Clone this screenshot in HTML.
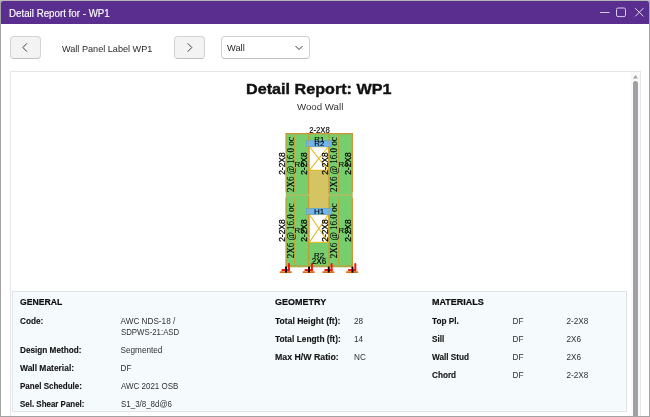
<!DOCTYPE html>
<html><head><meta charset="utf-8">
<style>
html,body{margin:0;padding:0;}
body{width:650px;height:417px;overflow:hidden;position:relative;background:#b9b9b9;will-change:transform;font-family:"Liberation Sans",sans-serif;color:#1a1a1a;}
.a{position:absolute;white-space:nowrap;line-height:1;}
#win{position:absolute;left:0;top:0;width:648px;height:415px;border:1px solid #a3a3a3;border-top-color:#b5b5b5;background:#fff;border-radius:3px 3px 0 0;}
#tb{position:absolute;left:1px;top:1px;width:648px;height:23px;background:#592e8e;border-radius:2px 2px 0 0;}
.btn{position:absolute;top:36px;width:29px;height:21px;border:1px solid #d1d3d6;border-bottom-color:#bfc2c6;border-radius:4px;background:#f3f3f3;}
#dd{position:absolute;left:221px;top:36px;width:87px;height:21px;border:1px solid #d0d0d0;border-bottom-color:#bdbdbd;border-radius:4px;background:#fff;}
#frame{position:absolute;left:10px;top:71px;width:629px;height:360px;border:1px solid #e6e6e6;background:#fff;}
#track{position:absolute;left:631px;top:72px;width:9px;height:345px;background:#f9f9f9;}
#thumb{position:absolute;left:633px;top:81px;width:5px;height:340px;border-radius:2.5px;background:#9f9fa4;}
#info{position:absolute;left:12px;top:291px;width:613px;height:119px;border:1px solid #dfe4ea;background:#f5fafd;}
.h{font-weight:700;font-size:9px;color:#0d0d0d;-webkit-text-stroke:0.2px #0d0d0d;}
.l{font-weight:700;font-size:8.2px;color:#141414;-webkit-text-stroke:0.12px #141414;}
.v{font-size:8.2px;color:#303030;}
</style></head><body>
<div id="win"></div>
<div id="tb"></div>
<div class="a" style="left:9px;top:9px;font-size:10px;color:#fff;transform:scaleX(0.975);transform-origin:0 0;-webkit-text-stroke:0.15px #fff;">Detail Report for - WP1</div>
<svg class="a" style="left:0;top:0" width="650" height="30">
 <line x1="600" y1="12.5" x2="609.5" y2="12.5" stroke="#d8cbe8" stroke-width="1"/>
 <rect x="616.5" y="8" width="9" height="8.6" rx="1.5" fill="none" stroke="#d8cbe8" stroke-width="1"/>
 <path d="M635.2 8.2 L643.4 16.4 M643.4 8.2 L635.2 16.4" stroke="#e3d9ef" stroke-width="1"/>
</svg>

<div class="btn" style="left:10px"></div>
<div class="btn" style="left:174px"></div>
<svg class="a" style="left:0;top:30px" width="320" height="40">
 <path d="M27 13.3 L22.9 17.5 L27 21.7" fill="none" stroke="#404040" stroke-width="1"/>
 <path d="M187.7 13.3 L191.8 17.5 L187.7 21.7" fill="none" stroke="#404040" stroke-width="1"/>
</svg>
<div class="a" style="left:62px;top:43.5px;font-size:9.6px;color:#2a2a2a;transform:scaleX(0.95);transform-origin:0 0;">Wall Panel Label WP1</div>
<div id="dd"></div>
<div class="a" style="left:227px;top:43px;font-size:9.6px;color:#2a2a2a;transform:scaleX(0.97);transform-origin:0 0;">Wall</div>
<svg class="a" style="left:290px;top:40px" width="20" height="15">
 <path d="M5.5 6 L9 9.5 L12.5 6" fill="none" stroke="#3a3a3a" stroke-width="1"/>
</svg>

<div id="frame"></div>
<div id="track"></div>
<svg class="a" style="left:631px;top:72px" width="9" height="10"><path d="M2 6.5 L4.5 3 L7 6.5 Z" fill="#a3a3a8"/></svg>
<div id="thumb"></div>

<div class="a" style="left:246px;top:81px;font-size:15.4px;font-weight:700;color:#111;-webkit-text-stroke:0.4px #111;transform:scaleX(1.05);transform-origin:0 0;">Detail Report: WP1</div>
<div class="a" style="left:297px;top:102px;font-size:9.7px;color:#333;">Wood Wall</div>

<!-- DIAGRAM -->
<svg class="a" style="left:0;top:0;will-change:transform" width="650" height="290" id="dg">
<rect x="286" y="133.5" width="66.4" height="132.5" fill="#76ce6c"/>
<rect x="308.7" y="171" width="20.3" height="37.5" fill="#d4c464"/>
<rect x="308.7" y="146.7" width="20.3" height="24.30000000000001" fill="#fff"/>
<path d="M309.3 146.7 L328.4 170.4 M328.4 146.7 L309.3 170.4" stroke="#e2bd2a" stroke-width="1.1" fill="none"/>
<rect x="309.3" y="146.7" width="19.1" height="23.70000000000001" fill="none" stroke="#e2bd2a" stroke-width="1.2"/>
<rect x="308.7" y="214.5" width="20.3" height="28.5" fill="#fff"/>
<path d="M309.3 214.5 L328.4 242.4 M328.4 214.5 L309.3 242.4" stroke="#e2bd2a" stroke-width="1.1" fill="none"/>
<rect x="309.3" y="214.5" width="19.1" height="27.9" fill="none" stroke="#e2bd2a" stroke-width="1.2"/>
<line x1="286" y1="195" x2="308.7" y2="195" stroke="#c8b55a" stroke-width="1.2"/>
<line x1="329" y1="195" x2="352.4" y2="195" stroke="#c8b55a" stroke-width="1.2"/>
<line x1="294.5" y1="134.5" x2="294.5" y2="192.3" stroke="#c9a039" stroke-width="0.9"/>
<line x1="294.5" y1="197.8" x2="294.5" y2="264" stroke="#c9a039" stroke-width="0.9"/>
<line x1="338.6" y1="134.5" x2="338.6" y2="192.3" stroke="#c9a039" stroke-width="0.9"/>
<line x1="338.6" y1="197.8" x2="338.6" y2="264" stroke="#c9a039" stroke-width="0.9"/>
<rect x="286" y="265" width="66.4" height="2.3" fill="#a9ad4c"/>
<rect x="306.6" y="140.8" width="25.1" height="5.7" fill="#6fb5ee" stroke="#5b9fd6" stroke-width="0.7"/>
<rect x="306.6" y="208.60000000000002" width="25.1" height="5.7" fill="#6fb5ee" stroke="#5b9fd6" stroke-width="0.7"/>
<path d="M286 192.3 L286 133.6 L352.4 133.6 L352.4 192.3" fill="none" stroke="#cf9430" stroke-width="1.2"/>
<path d="M286 197.6 L286 267 M352.4 197.6 L352.4 267" fill="none" stroke="#cf9430" stroke-width="1.2"/>
<path d="M286 192.3 L286 197.6 M352.4 192.3 L352.4 197.6" fill="none" stroke="#cf9430" stroke-width="1" stroke-opacity="0.35"/>
<line x1="308.7" y1="133.6" x2="308.7" y2="194" stroke="#cf9430" stroke-width="1.1" />
<line x1="308.7" y1="196.5" x2="308.7" y2="266" stroke="#cf9430" stroke-width="1.1"/>
<line x1="329" y1="133.6" x2="329" y2="194" stroke="#cf9430" stroke-width="1.1" />
<line x1="329" y1="196.5" x2="329" y2="266" stroke="#cf9430" stroke-width="1.1"/>
<rect x="306.6" y="140.8" width="25.1" height="5.7" fill="#6fb5ee" fill-opacity="0.6"/>
<rect x="306.6" y="208.60000000000002" width="25.1" height="5.7" fill="#6fb5ee" fill-opacity="0.6"/>
<g font-family="Liberation Sans" fill="#000" stroke="#000" stroke-width="0.12">
<text x="0" y="0" font-size="8.8" text-anchor="middle" transform="translate(319.5 132.7) scale(0.885 1)">2-2X8</text>
<text x="319.3" y="142.3" font-size="7.8" text-anchor="middle">R1</text>
<text x="319.3" y="146.3" font-size="7.8" text-anchor="middle">R2</text>
<text x="319.2" y="214.1" font-size="8" text-anchor="middle">H1</text>
<text x="319" y="257.6" font-size="7.9" text-anchor="middle">R2</text>
<text x="319" y="264.4" font-size="8.2" text-anchor="middle">2X6</text>
<text x="294.6" y="166.8" font-size="7.8">R6</text>
<text x="338.6" y="166.8" font-size="7.8">R4</text>
<text x="294.6" y="233" font-size="7.8">R5</text>
<text x="338.6" y="233" font-size="7.8">R3</text>
</g>
<g font-family="Liberation Serif" fill="#000" stroke="#000" stroke-width="0.1">
<text x="0" y="0" font-size="10.2" text-anchor="middle" transform="translate(293.5 164.6) rotate(-90) scale(0.885 1)">2X6 @ 16.0 oc</text>
<text x="0" y="0" font-size="10.2" text-anchor="middle" transform="translate(337.2 164.6) rotate(-90) scale(0.885 1)">2X6 @ 16.0 oc</text>
<text x="0" y="0" font-size="10.2" text-anchor="middle" transform="translate(293.5 230.9) rotate(-90) scale(0.885 1)">2X6 @ 16.0 oc</text>
<text x="0" y="0" font-size="10.2" text-anchor="middle" transform="translate(337.2 230.9) rotate(-90) scale(0.885 1)">2X6 @ 16.0 oc</text>
</g>
<g font-family="Liberation Sans" fill="#000" stroke="#000" stroke-width="0.25">
<text x="285.2" y="163.6" font-size="8.4" text-anchor="middle" transform="rotate(-90 285.2 163.6)">2-2X8</text>
<text x="307.0" y="163.6" font-size="8.4" text-anchor="middle" transform="rotate(-90 307.0 163.6)">2-2X8</text>
<text x="328.4" y="163.6" font-size="8.4" text-anchor="middle" transform="rotate(-90 328.4 163.6)">2-2X8</text>
<text x="350.6" y="163.6" font-size="8.4" text-anchor="middle" transform="rotate(-90 350.6 163.6)">2-2X8</text>
<text x="285.2" y="230.6" font-size="8.4" text-anchor="middle" transform="rotate(-90 285.2 230.6)">2-2X8</text>
<text x="307.0" y="230.6" font-size="8.4" text-anchor="middle" transform="rotate(-90 307.0 230.6)">2-2X8</text>
<text x="328.4" y="230.6" font-size="8.4" text-anchor="middle" transform="rotate(-90 328.4 230.6)">2-2X8</text>
<text x="350.6" y="230.6" font-size="8.4" text-anchor="middle" transform="rotate(-90 350.6 230.6)">2-2X8</text>
</g>
<line x1="280.4" y1="272.1" x2="290.9" y2="272.1" stroke="#d9700f" stroke-width="1.9" stroke-linecap="round"/>
<line x1="288.9" y1="264" x2="288.9" y2="270.6" stroke="#ff1010" stroke-width="2" stroke-linecap="round"/>
<line x1="282.4" y1="269.9" x2="288.9" y2="269.9" stroke="#ff1010" stroke-width="2" stroke-linecap="round"/>
<rect x="285.1" y="266.6" width="1.9" height="6" fill="#000"/>
<line x1="303.4" y1="272.1" x2="313.9" y2="272.1" stroke="#d9700f" stroke-width="1.9" stroke-linecap="round"/>
<line x1="311.9" y1="264" x2="311.9" y2="270.6" stroke="#ff1010" stroke-width="2" stroke-linecap="round"/>
<line x1="305.4" y1="269.9" x2="311.9" y2="269.9" stroke="#ff1010" stroke-width="2" stroke-linecap="round"/>
<rect x="308.1" y="266.6" width="1.9" height="6" fill="#000"/>
<line x1="323.09999999999997" y1="272.1" x2="333.59999999999997" y2="272.1" stroke="#d9700f" stroke-width="1.9" stroke-linecap="round"/>
<line x1="331.59999999999997" y1="264" x2="331.59999999999997" y2="270.6" stroke="#ff1010" stroke-width="2" stroke-linecap="round"/>
<line x1="325.09999999999997" y1="269.9" x2="331.59999999999997" y2="269.9" stroke="#ff1010" stroke-width="2" stroke-linecap="round"/>
<rect x="327.8" y="266.6" width="1.9" height="6" fill="#000"/>
<line x1="346.79999999999995" y1="272.1" x2="357.29999999999995" y2="272.1" stroke="#d9700f" stroke-width="1.9" stroke-linecap="round"/>
<line x1="355.29999999999995" y1="264" x2="355.29999999999995" y2="270.6" stroke="#ff1010" stroke-width="2" stroke-linecap="round"/>
<line x1="348.79999999999995" y1="269.9" x2="355.29999999999995" y2="269.9" stroke="#ff1010" stroke-width="2" stroke-linecap="round"/>
<rect x="351.5" y="266.6" width="1.9" height="6" fill="#000"/>
</svg>

<div id="info"></div>
<div class="a h" style="transform:scaleX(0.96);transform-origin:0 0;left:20px;top:298px;">GENERAL</div>
<div class="a l" style="left:20px;top:318px;">Code:</div>
<div class="a l" style="left:20px;top:347px;">Design Method:</div>
<div class="a l" style="transform:scaleX(1.03);transform-origin:0 0;left:20px;top:365px;">Wall Material:</div>
<div class="a l" style="transform:scaleX(0.98);transform-origin:0 0;left:20px;top:383px;">Panel Schedule:</div>
<div class="a l" style="transform:scaleX(0.97);transform-origin:0 0;left:20px;top:401px;">Sel. Shear Panel:</div>
<div class="a v" style="left:120.5px;top:318px;">AWC NDS-18 /</div>
<div class="a v" style="transform:scaleX(0.955);transform-origin:0 0;left:120.5px;top:329px;">SDPWS-21:ASD</div>
<div class="a v" style="left:120.5px;top:347px;">Segmented</div>
<div class="a v" style="left:120.5px;top:365px;">DF</div>
<div class="a v" style="transform:scaleX(0.975);transform-origin:0 0;left:120.5px;top:383px;">AWC 2021 OSB</div>
<div class="a v" style="transform:scaleX(0.97);transform-origin:0 0;left:120.5px;top:401px;">S1_3/8_8d@6</div>

<div class="a h" style="left:275px;top:298px;">GEOMETRY</div>
<div class="a l" style="transform:scaleX(1.045);transform-origin:0 0;left:275px;top:318px;">Total Height (ft):</div>
<div class="a l" style="transform:scaleX(1.02);transform-origin:0 0;left:275px;top:336px;">Total Length (ft):</div>
<div class="a l" style="transform:scaleX(1.07);transform-origin:0 0;left:275px;top:354px;">Max H/W Ratio:</div>
<div class="a v" style="left:354px;top:318px;">28</div>
<div class="a v" style="left:354px;top:336px;">14</div>
<div class="a v" style="left:354px;top:354px;">NC</div>

<div class="a h" style="left:432px;top:298px;">MATERIALS</div>
<div class="a l" style="left:432px;top:318px;">Top Pl.</div>
<div class="a l" style="left:432px;top:336px;">Sill</div>
<div class="a l" style="left:432px;top:354px;">Wall Stud</div>
<div class="a l" style="left:432px;top:372px;">Chord</div>
<div class="a v" style="left:512.5px;top:318px;">DF</div>
<div class="a v" style="left:512.5px;top:336px;">DF</div>
<div class="a v" style="left:512.5px;top:354px;">DF</div>
<div class="a v" style="left:512.5px;top:372px;">DF</div>
<div class="a v" style="left:566.5px;top:318px;">2-2X8</div>
<div class="a v" style="left:566.5px;top:336px;">2X6</div>
<div class="a v" style="left:566.5px;top:354px;">2X6</div>
<div class="a v" style="left:566.5px;top:372px;">2-2X8</div>
<div style="position:absolute;left:0;top:24px;width:648px;height:392px;border:1px solid #a3a3a3;border-top:none;pointer-events:none;"></div>
</body></html>
